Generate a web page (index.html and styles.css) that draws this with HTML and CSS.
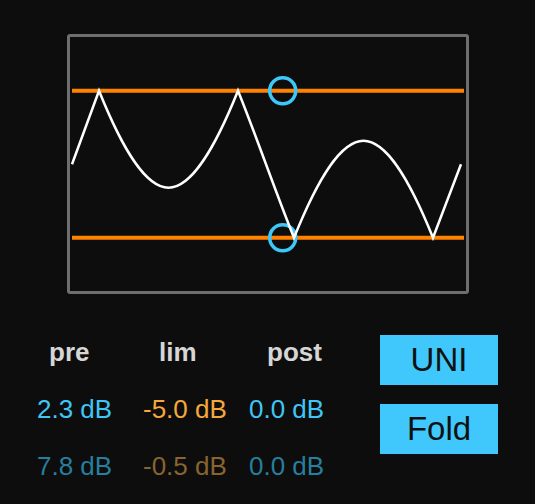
FILE: index.html
```html
<!DOCTYPE html>
<html>
<head>
<meta charset="utf-8">
<link rel="stylesheet" href="styles.css">
</head>
<body>
<div class="panel">
  <div class="scope">
    <svg class="scope-svg" width="396" height="254" viewBox="0 0 396 254">
      <line class="limit" x1="2" y1="53.7" x2="394" y2="53.7"/>
      <line class="limit" x1="2" y1="200.7" x2="394" y2="200.7"/>
      <circle class="handle" cx="212.7" cy="53.7" r="13"/>
      <circle class="handle" cx="212.7" cy="200.7" r="13"/>
      <path class="wave" d="M2 127.2 L29 53.7 C52.2 111.3 75.3 150.7 98.5 150.7 C121.7 150.7 144.8 111.3 168 53.7 C186.7 100.1 205.3 154.3 224 200.7 C247.2 143.1 270.3 103.7 293.5 103.7 C316.7 103.7 339.8 143.1 363 200.7 L391 127.2"/>
    </svg>
  </div>
  <div class="lower">
    <div class="readouts">
      <div class="head head-pre">pre</div>
      <div class="head head-lim">lim</div>
      <div class="head head-post">post</div>
      <div class="val blue">2.3 dB</div>
      <div class="val orange">-5.0 dB</div>
      <div class="val blue">0.0 dB</div>
      <div class="val blue-dim">7.8 dB</div>
      <div class="val orange-dim">-0.5 dB</div>
      <div class="val blue-dim">0.0 dB</div>
    </div>
    <div class="buttons">
      <div class="btn">UNI</div>
      <div class="btn">Fold</div>
    </div>
  </div>
</div>
</body>
</html>
```

FILE: styles.css
```css
html, body {
  margin: 0;
  padding: 0;
  background: #0d0d0d;
}
body {
  width: 535px;
  height: 504px;
  overflow: hidden;
  font-family: "Liberation Sans", Arial, sans-serif;
}
.panel {
  padding-top: 34px;
}
.scope {
  margin-left: 67px;
  width: 396px;
  height: 254px;
  border: 3px solid #6e6e6e;
  border-radius: 3px;
}
.scope-svg {
  display: block;
}
.limit {
  stroke: #ff8200;
  stroke-width: 4;
}
.handle {
  fill: none;
  stroke: #3cc8f8;
  stroke-width: 3.5;
}
.wave {
  fill: none;
  stroke: #ffffff;
  stroke-width: 2.5;
  stroke-linejoin: miter;
}
.lower {
  display: flex;
  align-items: flex-start;
  margin-top: 41px;
  padding-left: 37px;
}
.readouts {
  display: grid;
  grid-template-columns: 106px 106px 106px;
  row-gap: 27px;
  padding-top: 2px;
}
.head, .val {
  font-size: 26px;
  line-height: 30px;
  white-space: nowrap;
}
.head {
  font-weight: bold;
  color: #d6d6d6;
}
.head-pre { padding-left: 12px; }
.head-lim { padding-left: 16px; }
.head-post { padding-left: 18px; }
.blue { color: #3fc6f5; }
.orange { color: #f7a83a; }
.blue-dim { color: #287e9e; }
.orange-dim { color: #8a6430; }
.buttons {
  margin-left: 25px;
  display: flex;
  flex-direction: column;
  gap: 19px;
}
.btn {
  width: 118px;
  height: 50px;
  line-height: 50px;
  background: #40c8fc;
  color: #111111;
  font-size: 33px;
  text-align: center;
}
```
